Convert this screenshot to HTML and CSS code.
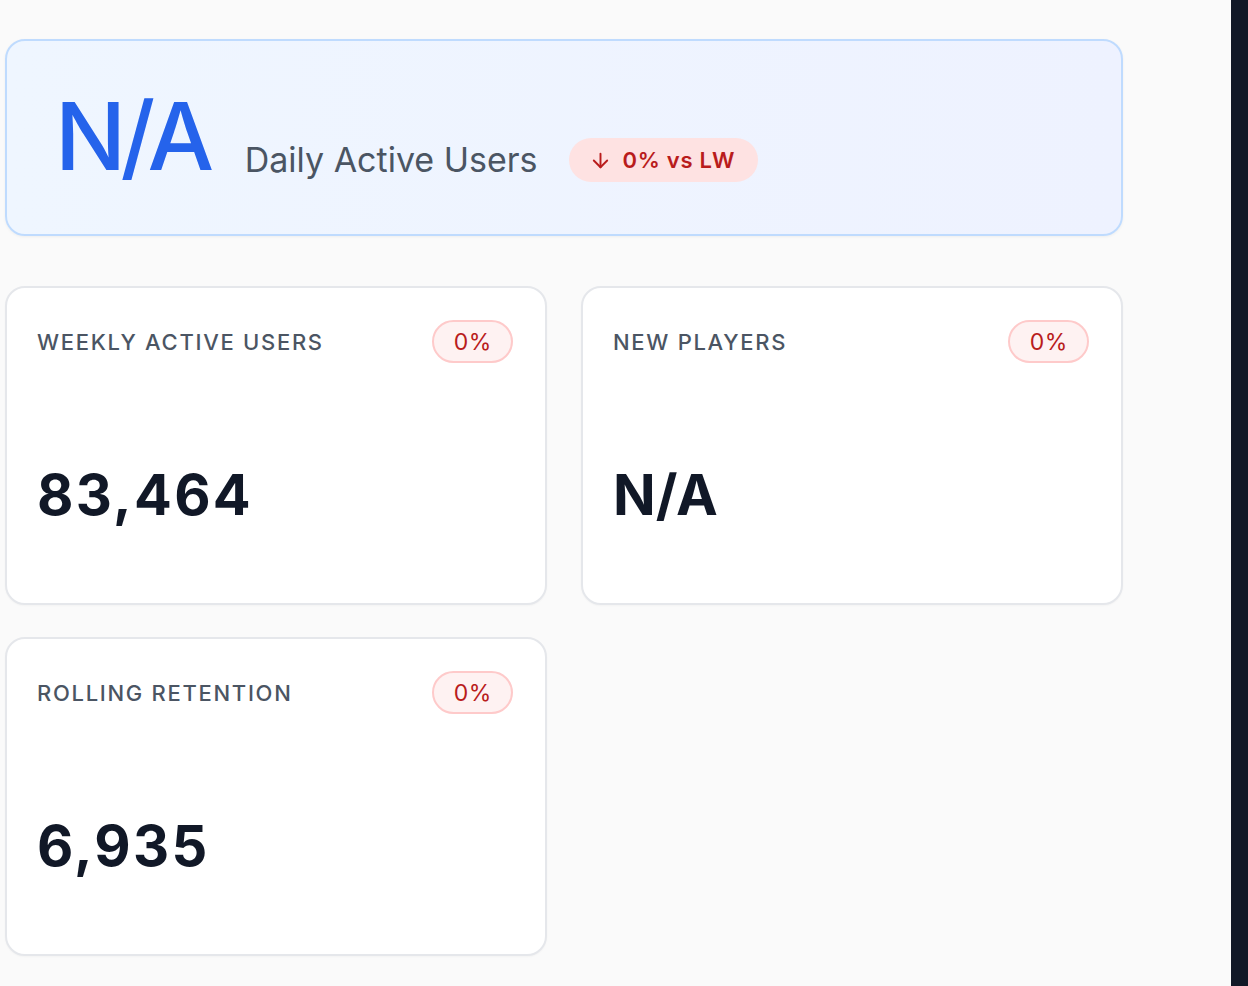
FILE: index.html
```html
<!DOCTYPE html>
<html lang="en">
<head>
<meta charset="utf-8">
<title>Dashboard</title>
<link rel="stylesheet" href="styles.css">
</head>
<body>
<div class="layout">
  <main class="main">
    <section class="hero">
      <div class="hero-value">N/A</div>
      <div class="hero-label">Daily Active Users</div>
      <div class="hero-badge">
        <svg class="arrow" viewBox="0 0 24 24" fill="none" stroke="currentColor" stroke-width="2" stroke-linecap="round" stroke-linejoin="round"><path d="M12 5v14"/><path d="M19 12l-7 7-7-7"/></svg>
        <span>0% vs LW</span>
      </div>
    </section>
    <section class="grid">
      <div class="card">
        <div class="card-head">
          <span class="card-label">Weekly Active Users</span>
          <span class="pill">0%</span>
        </div>
        <div class="card-value num">83,464</div>
      </div>
      <div class="card">
        <div class="card-head">
          <span class="card-label">New Players</span>
          <span class="pill">0%</span>
        </div>
        <div class="card-value">N/A</div>
      </div>
      <div class="card">
        <div class="card-head">
          <span class="card-label">Rolling Retention</span>
          <span class="pill">0%</span>
        </div>
        <div class="card-value num">6,935</div>
      </div>
    </section>
  </main>
  <aside class="edge"></aside>
</div>
</body>
</html>
```

FILE: styles.css
```css
* { box-sizing: border-box; }
html, body { margin: 0; height: 100%; }
body {
  background: #fafafa;
  font-family: Inter, "Noto Sans", sans-serif;
  color: #111827;
}
.layout {
  display: flex;
  min-height: 100vh;
}
.main {
  flex: 1;
  padding: 39px 0 0 5px;
}
.edge {
  width: 17px;
  background: #111827;
}
.hero {
  width: 1118px;
  height: 197px;
  display: flex;
  align-items: baseline;
  padding: 48px;
  border: 2px solid #bfdbfe;
  border-radius: 20px;
  background: linear-gradient(to right, #eff6ff, #eef2ff);
  box-shadow: 0 1px 3px rgba(0,0,0,0.05);
}
.hero-value {
  font-size: 94px;
  line-height: 1;
  font-weight: 500;
  color: #2563eb;
  letter-spacing: -5.5px;
  margin-right: 36px;
}
.hero-label {
  font-size: 34px;
  color: #4b5563;
  line-height: 1;
  margin-right: 31px;
  position: relative;
  top: 2px;
}
.hero-badge {
  align-self: flex-end;
  margin-bottom: 4px;
  display: flex;
  align-items: center;
  gap: 11px;
  height: 44px;
  padding: 0 23px 0 20px;
  border-radius: 999px;
  background: #fee2e2;
  color: #b91c1c;
  font-size: 22px;
  font-weight: 600;
  letter-spacing: 0.7px;
}
.arrow { width: 23px; height: 23px; }
.grid {
  width: 1118px;
  margin-top: 50px;
  display: grid;
  grid-template-columns: 1fr 1fr;
  gap: 32px 34px;
}
.card {
  height: 319px;
  padding: 32px 32px 32px 30px;
  border: 2px solid #e5e7eb;
  border-radius: 20px;
  background: #ffffff;
  box-shadow: 0 1px 2px rgba(0,0,0,0.03);
}
.card-head {
  display: flex;
  align-items: center;
  justify-content: space-between;
}
.card-label {
  text-transform: uppercase;
  font-size: 22px;
  letter-spacing: 1.7px;
  color: #4b5563;
  font-weight: 500;
}
.pill {
  height: 43px;
  display: flex;
  align-items: center;
  padding: 0 19px 0 20px;
  border: 2px solid #fecaca;
  background: #fef2f2;
  border-radius: 999px;
  color: #b91c1c;
  font-size: 23px;
  letter-spacing: 0.6px;
}
.card-value {
  margin-top: 104px;
  font-size: 56px;
  line-height: 1;
  font-weight: 700;
  color: #111827;
}
.num {
  letter-spacing: 2.3px;
}
```
